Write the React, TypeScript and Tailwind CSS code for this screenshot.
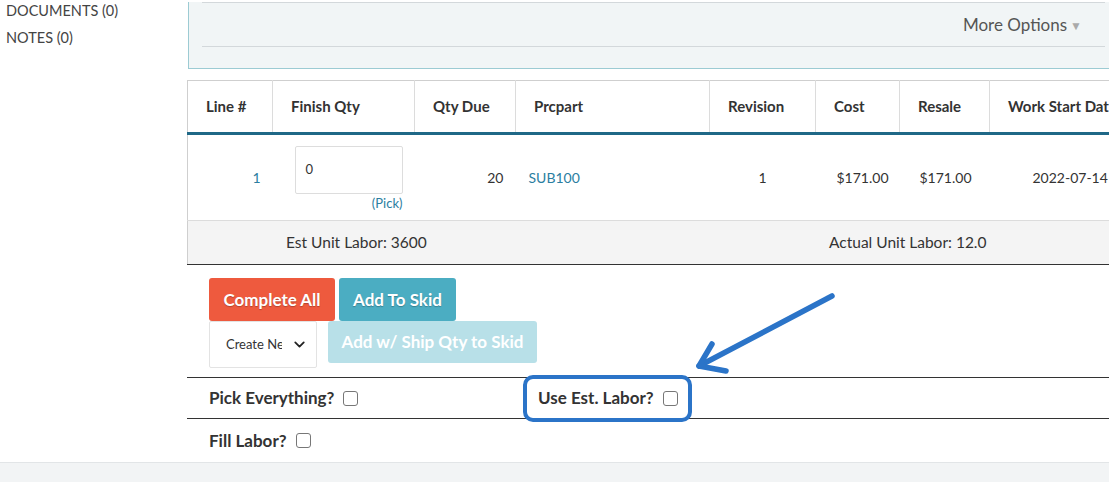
import { ChevronDown } from "lucide-react";

const cols = [
  { label: "Line #", w: "w-[85px]" },
  { label: "Finish Qty", w: "w-[142px]" },
  { label: "Qty Due", w: "w-[101px]" },
  { label: "Prcpart", w: "w-[194px]" },
  { label: "Revision", w: "w-[106px]" },
  { label: "Cost", w: "w-[84px]" },
  { label: "Resale", w: "w-[90px]" },
  { label: "Work Start Date", w: "w-[160px]" },
];

function Check() {
  return <span className="inline-block h-[15px] w-[15px] rounded-[3px] border border-[#777] bg-white" />;
}

export default function App() {
  return (
    <div className="relative h-[482px] w-[1109px] overflow-hidden bg-white font-['Lato',sans-serif] text-[#333]">
      <div className="flex h-[462px]">
        <aside className="w-[187px] shrink-0 pl-[6px] text-[14.5px] leading-[27px] text-[#444] -mt-[3px]">
          <div>DOCUMENTS (0)</div>
          <div>NOTES (0)</div>
        </aside>

        <main className="min-w-0 flex-1 overflow-hidden">
          {/* options panel */}
          <div className="ml-[1px] h-[67px] w-[930px] border-b border-l border-[#9ccbd3] bg-[#f1f5f6] px-[13px]">
            <div className="mt-[2px] flex h-[45px] items-center justify-end border-y border-[#d3d8db] pr-[23px] text-[17px] text-[#555]">
              More Options
              <span className="ml-[3px] mt-[2px] text-[12px] text-[#aaa]">▼</span>
            </div>
          </div>

          {/* line items table */}
          <table className="mt-[11px] w-[962px] table-fixed border-collapse border-l border-t border-[#cfcfcf] text-[14px]">
            <thead>
              <tr className="border-b-[3px] border-[#1f6887]">
                {cols.map((c) => (
                  <th key={c.label} className={`${c.w} h-[53px] border-r border-[#dcdcdc] pl-[18px] text-left text-[15px] font-bold whitespace-nowrap`}>
                    {c.label}
                  </th>
                ))}
              </tr>
            </thead>
            <tbody>
              <tr className="h-[87px] border-b border-[#dcdcdc]">
                <td className="pr-[12px] text-right text-[#2b7ea1]">1</td>
                <td className="pl-[22px]">
                  <div className="w-[108px]">
                    <div className="flex h-[48px] items-center rounded-[2px] border border-[#ddd] pl-[10px] text-[13px]">0</div>
                    <div className="mt-[2px] text-right text-[13px] leading-[14px] text-[#2b7ea1]">(Pick)</div>
                  </div>
                </td>
                <td className="pr-[12px] text-right">20</td>
                <td className="pl-[13px] text-[#2b7ea1]">SUB100</td>
                <td className="text-center">1</td>
                <td className="pl-[21px]">$171.00</td>
                <td className="pl-[20px]">$171.00</td>
                <td className="pl-[43px] whitespace-nowrap">2022-07-14</td>
              </tr>
              <tr className="h-[44px] border-b border-[#333] bg-[#f4f4f4] text-[15.5px]">
                <td colSpan={8}>
                  <div className="flex">
                    <span className="w-[641px] shrink-0 pl-[98px]">Est Unit Labor: 3600</span>
                    <span>Actual Unit Labor: 12.0</span>
                  </div>
                </td>
              </tr>
            </tbody>
          </table>

          {/* actions */}
          <div className="pl-[22px] pt-[13px]">
            <div className="flex gap-[4px]">
              <button className="h-[43px] w-[126px] rounded-[3px] bg-[#ee5a3e] text-[17px] font-bold text-white [text-shadow:0_1px_1px_rgba(0,0,0,0.25)]">
                Complete All
              </button>
              <button className="h-[43px] w-[117px] rounded-[3px] bg-[#4badc2] text-[17px] font-bold text-white [text-shadow:0_1px_1px_rgba(0,0,0,0.25)]">
                Add To Skid
              </button>
            </div>
            <div className="flex items-start gap-[11px]">
              <div className="flex h-[47px] w-[108px] items-center justify-between rounded-[2px] border border-[#e3e3e3] bg-white pl-[16px] pr-[8px] text-[13px]">
                <span className="w-[56px] overflow-hidden whitespace-nowrap">Create New</span>
                <ChevronDown size={17} strokeWidth={2.5} className="text-[#222]" />
              </div>
              <button className="h-[42px] w-[209px] rounded-[3px] bg-[#b8e0e8] text-[17px] font-bold text-white">
                Add w/ Ship Qty to Skid
              </button>
            </div>
          </div>

          <div className="mt-[9px] w-[962px] text-[17px] font-bold">
            <div className="flex h-[42px] items-center border-y border-[#333] pl-[22px]">
              <span className="flex w-[329px] items-center gap-[9px]">
                Pick Everything? <Check />
              </span>
              <span className="flex items-center gap-[9px]">
                Use Est. Labor? <Check />
              </span>
            </div>
            <div className="flex h-[43px] items-center pl-[22px]">
              <span className="flex items-center gap-[9px]">
                Fill Labor? <Check />
              </span>
            </div>
          </div>
        </main>
      </div>
      <div className="h-[20px] border-t border-[#e2e5e7] bg-[#f2f4f5]" />

      {/* annotation overlay */}
      <div className="absolute left-[523px] top-[375px] h-[47px] w-[169px] rounded-[10px] border-[4px] border-[#2b74c8]" />
      <svg className="absolute left-[690px] top-[288px]" width="150" height="90" viewBox="690 288 150 90">
        <g stroke="#2b74c8" strokeWidth="5.5" strokeLinecap="round" strokeLinejoin="round" fill="none">
          <path d="M832 296 L699 366" />
          <path d="M712 344 L699 366 L726 371" />
        </g>
      </svg>
    </div>
  );
}
